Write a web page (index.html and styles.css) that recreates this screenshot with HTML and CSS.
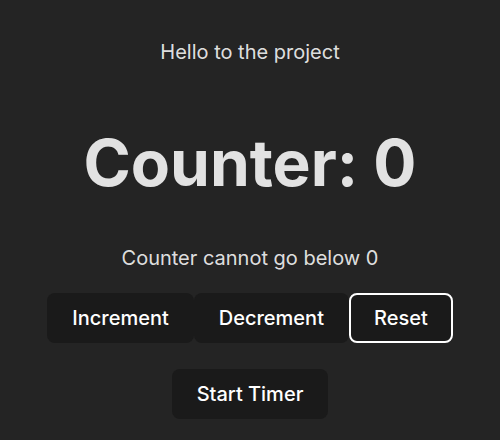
FILE: index.html
```html
<!DOCTYPE html>
<html>
<head>
<meta charset="utf-8">
<link rel="stylesheet" href="styles.css">
</head>
<body>
<div class="app">
  <p class="hello">Hello to the project</p>
  <h1 class="title">Counter: 0</h1>
  <p class="note">Counter cannot go below 0</p>
  <div class="row">
    <button class="btn">Increment</button>
    <button class="btn">Decrement</button>
    <button class="btn btn-focus">Reset</button>
  </div>
  <div class="row timer-row">
    <button class="btn">Start Timer</button>
  </div>
</div>
</body>
</html>
```
FILE: styles.css
```css
html, body {
  margin: 0;
  padding: 0;
}
body {
  background: #242424;
  color: rgba(255, 255, 255, 0.87);
  font-family: Inter, "Noto Sans", sans-serif;
  font-size: 20px;
  line-height: 1.5;
  font-weight: 400;
}
.app {
  display: flex;
  flex-direction: column;
  align-items: center;
  padding-top: 37px;
}
.hello {
  margin: 0;
}
.title {
  margin: 61px 0 0;
  font-size: 64px;
  line-height: 1.1;
  font-weight: 700;
}
.note {
  margin: 45px 0 0;
}
.row {
  display: flex;
  margin-top: 20px;
}
.timer-row {
  margin-top: 26px;
}
.btn {
  font-family: inherit;
  font-size: 20px;
  font-weight: 500;
  line-height: normal;
  color: #fff;
  background: #1a1a1a;
  border: 1px solid transparent;
  border-radius: 8px;
  padding: 0.6em 1.2em;
  cursor: pointer;
}
.btn-focus {
  border: 2px solid #fff;
  padding: calc(0.6em - 1px) calc(1.2em - 1px);
}
```
